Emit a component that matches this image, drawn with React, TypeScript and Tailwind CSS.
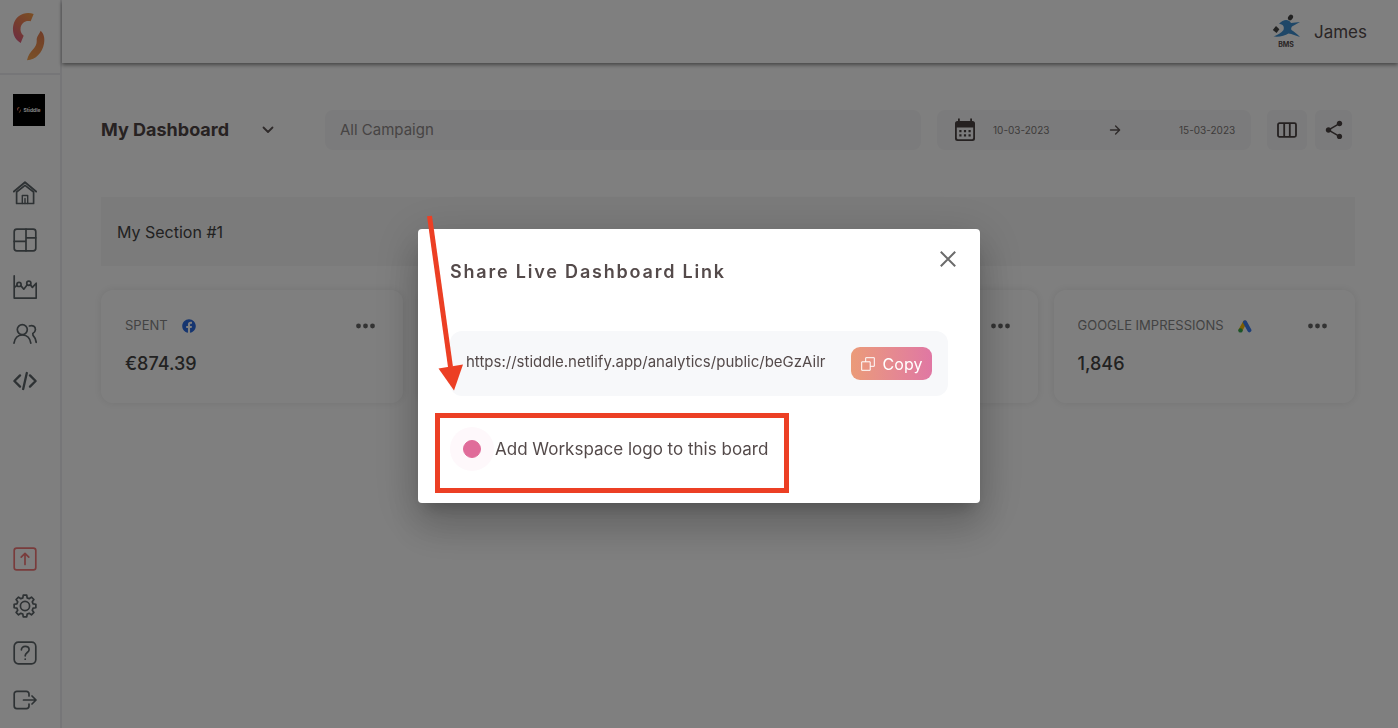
import React, { useState } from "react";
import { FaFacebook } from "react-icons/fa";
import { MdShare } from "react-icons/md";

function BrandMark({ className }: { className: string }) {
  return (
    <svg viewBox="36 36 102 147" className={className} aria-hidden="true">
      <defs>
        <linearGradient id="brandLeft" x1="0.8" y1="0" x2="0.2" y2="1">
          <stop offset="0" stopColor="#f49a4a" />
          <stop offset="0.5" stopColor="#ec7a5c" />
          <stop offset="1" stopColor="#dc5a84" />
        </linearGradient>
        <linearGradient id="brandRight" x1="0.6" y1="0" x2="0.4" y2="1">
          <stop offset="0" stopColor="#e27b50" />
          <stop offset="1" stopColor="#f4a04e" />
        </linearGradient>
      </defs>
      <path fill="url(#brandLeft)" d="M101 42C88 37 70 38 57 48C44 58 38 74 39 91C40 108 48 121 62 129L71 107C63 101 60 92 62 82C65 69 77 60 92 64Z" />
      <path fill="url(#brandRight)" d="M122 92C132 101 135 115 132 131C127 157 108 179 81 181C84 166 91 157 100 147C108 138 111 131 110 117C111 108 118 101 122 92Z" />
    </svg>
  );
}

function Line({ children, width = 1.7 }: { children: React.ReactNode; width?: number }) {
  return (
    <svg
      viewBox="0 0 24 24"
      className="size-6"
      fill="none"
      stroke="currentColor"
      strokeWidth={width}
      strokeLinecap="round"
      strokeLinejoin="round"
      aria-hidden="true"
    >
      {children}
    </svg>
  );
}

const HomeIcon = () => (
  <Line>
    <path d="M.9 10.600 12 1.300l11.100 9.300" strokeWidth="1.900" />
    <path d="M3.600 11v11.500h17V11L12 4.400z" />
    <path d="M9.300 22.500v-8h5.400v8M12 17.500v5" strokeWidth="1.400" />
  </Line>
);
const BoardIcon = () => (
  <Line>
    <rect x="1.200" y="1.200" width="21.600" height="21.600" rx="2.600" />
    <path d="M13 1.200v21.600M1.200 13.400H13M13 9.800h9.800" />
  </Line>
);
const ChartIcon = () => (
  <Line>
    <path d="M1.200.9v22.200h22V8.200l-3.800 4.200-2.200-2.800M1.200 12.600l2.800-2.200M7.800 10.600l3 3.600 3.600-4.600" />
    <circle cx="6" cy="9.400" r="2.100" />
    <circle cx="15.800" cy="8.200" r="2.100" />
  </Line>
);
const UsersIcon = () => (
  <Line>
    <circle cx="9.300" cy="7.600" r="5" />
    <path d="M1 21.200c.6-5 4-8.400 8.400-8.400s7.800 3.400 8.400 8.400M16.400 4c3.600-1.200 6.200.8 6 3.800-.1 1.700-1.200 2.900-2.600 3.600 0 1 .1 2.100.8 2.700 1.500 1.500 2.400 3.600 2.600 6.300" />
  </Line>
);
const CodeIcon = () => (
  <Line width={2.3}>
    <path d="M7 6.400 1.400 12 7 17.600M17 6.400l5.600 5.600-5.600 5.600M13.800 4l-3.600 16" />
  </Line>
);
const UpgradeIcon = () => (
  <Line>
    <rect x="1.200" y="1.200" width="21.600" height="21.600" rx="2.400" />
    <path d="M12 17.500v-11M8.200 10.200 12 6.400l3.800 3.800" />
  </Line>
);

const gearOutline = Array.from({ length: 8 }, (_, tooth) =>
  [
    [-15, 8.4],
    [-9, 11],
    [9, 11],
    [15, 8.4],
  ].map(([offset, radius]) => {
    const angle = ((tooth * 45 + offset) * Math.PI) / 180;
    return `${(12 + radius * Math.sin(angle)).toFixed(2)} ${(12 - radius * Math.cos(angle)).toFixed(2)}`;
  }),
)
  .flat()
  .join("L");

const GearIcon = () => (
  <Line>
    <path d={`M${gearOutline}Z`} />
    <circle cx="12" cy="12" r="4.600" />
  </Line>
);
const HelpIcon = () => (
  <Line>
    <rect x="1.200" y="1.200" width="21.600" height="21.600" rx="4.200" />
    <path d="M8.400 8.800C8.400 6.600 10 5.400 12.200 5.400s3.900 1.300 3.900 3.300c0 2.700-3.900 3-3.900 6.100M12.200 18v.2" />
  </Line>
);
const LogoutIcon = () => (
  <Line>
    <path d="M16 8V6a2.600 2.600 0 0 0-2.600-2.600H3.800A2.600 2.600 0 0 0 1.200 6v12a2.600 2.600 0 0 0 2.600 2.600h9.600A2.600 2.600 0 0 0 16 18v-2M10.500 12h12.300M19 8l4 4-4 4" />
  </Line>
);

const topLinks = [
  { label: "Home", icon: <HomeIcon /> },
  { label: "Dashboards", icon: <BoardIcon /> },
  { label: "Analytics", icon: <ChartIcon /> },
  { label: "Contacts", icon: <UsersIcon /> },
  { label: "Code", icon: <CodeIcon /> },
];
const bottomLinks = [
  { label: "Upgrade", icon: <UpgradeIcon />, tint: "text-[#f27878]" },
  { label: "Settings", icon: <GearIcon />, tint: "text-[#5c6468]" },
  { label: "Help", icon: <HelpIcon />, tint: "text-[#5c6468]" },
  { label: "Log out", icon: <LogoutIcon />, tint: "text-[#5c6468]" },
];

function Sidebar() {
  return (
    <aside className="flex w-[62px] shrink-0 flex-col border-r-2 border-[#ededf0] text-[#5c6468]">
      <a href="#home" aria-label="Stiddle" className="flex h-[75px] items-center border-b-2 border-[#ededf0] pl-3">
        <BrandMark className="h-[49px] w-[34px]" />
      </a>
      <a href="#workspace" aria-label="Workspace" className="mt-[19px] ml-[13px] flex size-8 items-center justify-center gap-0.5 bg-black text-white">
        <BrandMark className="h-1.5 w-1" />
        <span className="text-[5px] leading-none font-bold">Stiddle</span>
      </a>
      <nav aria-label="Main" className="mt-[55px] flex flex-col gap-[23px] pl-[13px]">
        {topLinks.map((l) => (
          <a key={l.label} href="#nav" aria-label={l.label}>{l.icon}</a>
        ))}
      </nav>
      <nav aria-label="Account" className="mt-auto flex flex-col gap-[23px] pb-4 pl-[13px]">
        {bottomLinks.map((l) => (
          <a key={l.label} href="#account" aria-label={l.label} className={l.tint}>{l.icon}</a>
        ))}
      </nav>
    </aside>
  );
}

function Header() {
  return (
    <header className="flex h-[63px] items-center justify-end gap-3 pr-[31px] shadow-[0_2px_4px_rgba(0,0,0,0.45)]">
      <svg viewBox="0 0 30 36" className="h-9 w-[30px]" aria-hidden="true">
        <path fill="#3f8fd0" d="M7 10c4-5 10-5 12-1l9-1-8 4.500c-1 1.500-1 2.500-.5 3.500 3 2 6 4 8.500 7-4-1.500-8-3-11.500-3.500-3.500 2.500-9 3.500-15 3 4-1.500 8-3.500 10-6.500.5-2 .5-4-1-5-1.500-.8-2-1-3.500-1z" />
        <ellipse cx="18.500" cy="3.500" rx="2.300" ry="3" transform="rotate(35 18.500 3.500)" fill="#444" />
        <path fill="#444" d="m4 12 3.400 3.200L4.600 19 .8 16z" />
        <text x="14" y="33" textAnchor="middle" fontSize="7" fontWeight="700" fill="#544c4c">BMS</text>
      </svg>
      <span className="text-[17px] leading-6 text-[#544c4c]">James</span>
    </header>
  );
}

function Toolbar() {
  return (
    <div className="flex h-10 items-center gap-4 pr-[3px]">
      <div className="relative flex w-[208px] shrink-0 items-center">
        <select aria-label="Dashboard" className="w-[174px] appearance-none bg-transparent text-lg leading-6 font-bold text-[#4e4444] outline-none">
          <option>My Dashboard</option>
        </select>
        <svg viewBox="0 0 12 8" className="pointer-events-none absolute left-[161px] h-2 w-3" fill="none" stroke="#5c5454" strokeWidth="1.800" strokeLinecap="round" strokeLinejoin="round" aria-hidden="true">
          <path d="m1.500 1.500 4.500 4.500 4.500-4.500" />
        </svg>
      </div>
      <input
        aria-label="Campaign"
        placeholder="All Campaign"
        className="h-full min-w-0 flex-1 rounded-lg bg-[#f7f7f8] px-[15px] pb-0.5 text-[15px] text-[#8e8888] outline-none placeholder:text-[#8e8888]"
      />
      <div className="flex h-full w-[314px] shrink-0 items-center rounded-lg bg-[#f7f7f8] pr-3.5 pl-4 text-[10px] text-[#7c7676]">
        <svg viewBox="0 0 24 24" className="size-6" fill="#4a4242" aria-hidden="true">
          <path fillRule="evenodd" d="M5 .5h1.800V3h10.400V.5H19V3h.5A2.500 2.500 0 0 1 22 5.500v15a2.500 2.500 0 0 1-2.500 2.500h-15A2.500 2.500 0 0 1 2 20.500v-15A2.500 2.500 0 0 1 4.500 3H5zM3.800 9.500v10.300c0 .9.600 1.500 1.500 1.500h13.400c.9 0 1.500-.6 1.500-1.500V9.500z" />
          <path d="M6.300 12h2.200v2.200H6.300zm4.600 0h2.200v2.200h-2.200zm4.600 0h2.200v2.200h-2.200zM6.300 16.300h2.200v2.200H6.300zm4.600 0h2.200v2.200h-2.200zm4.600 0h2.200v2.200h-2.200z" />
        </svg>
        <input aria-label="Start date" defaultValue="10-03-2023" className="ml-4 w-[58px] bg-transparent outline-none" />
        <svg viewBox="0 0 12 12" className="mx-auto size-3" fill="none" stroke="#5c5454" strokeWidth="1.400" strokeLinecap="round" strokeLinejoin="round" aria-hidden="true">
          <path d="M1.500 6h9M6.600 2l4 4-4 4" />
        </svg>
        <input aria-label="End date" defaultValue="15-03-2023" className="w-[58px] bg-transparent outline-none" />
      </div>
      <div className="flex h-full shrink-0 gap-2">
        <button aria-label="Columns" className="flex w-10 items-center justify-center rounded-md bg-[#f7f7f8]">
          <svg viewBox="0 0 20 16" className="h-4 w-5" fill="none" stroke="#4a4242" strokeWidth="1.800" aria-hidden="true">
            <rect x="1" y="1.200" width="18" height="13.600" rx="1.500" />
            <path d="M7.200 1v14M12.800 1v14" />
          </svg>
        </button>
        <button aria-label="Share" className="flex w-[37px] items-center justify-center rounded-md bg-[#f7f7f8] text-[#4a4242]">
          <MdShare className="size-[22px]" />
        </button>
      </div>
    </div>
  );
}

const AdsIcon = () => (
  <svg viewBox="0 0 14 13" className="h-[13px] w-3.5" strokeLinecap="round" aria-hidden="true">
    <path d="M6.600 2.600 2.600 10" stroke="#fbbc04" strokeWidth="4" />
    <path d="m7 2.300 4.400 8" stroke="#3c7cf0" strokeWidth="4" />
    <circle cx="2.500" cy="10.400" r="2.200" fill="#34a853" />
  </svg>
);

function Metric({ label, value, icon }: { label?: string; value?: string; icon?: React.ReactNode }) {
  return (
    <article className="flex h-[113px] min-w-0 flex-col gap-3 rounded-xl bg-white px-6 pt-6 shadow-[0_0_10px_rgba(0,0,0,0.09)]">
      <div className="flex h-6 items-center">
        {label && <h3 className="mr-3.5 truncate text-[13px] text-[#868686]">{label}</h3>}
        {icon}
        <button aria-label="More options" className="ml-auto pr-1">
          <svg viewBox="0 0 19 6" className="h-1.5 w-[19px]" fill="#666" aria-hidden="true">
            <circle cx="2.500" cy="3" r="2.400" />
            <circle cx="9.500" cy="3" r="2.400" />
            <circle cx="16.500" cy="3" r="2.400" />
          </svg>
        </button>
      </div>
      {value && <p className="text-lg leading-7 font-medium text-[#444]">{value}</p>}
    </article>
  );
}

function ShareDialog() {
  const [logo, setLogo] = useState(true);
  return (
    <div className="fixed inset-0 flex items-center justify-center bg-black/50 pt-1">
      <section
        role="dialog"
        aria-modal="true"
        aria-labelledby="share-title"
        className="relative w-[562px] rounded bg-white px-8 pb-8 text-[#544a4a] shadow-[0_11px_15px_-7px_rgba(0,0,0,0.2),0_24px_38px_3px_rgba(0,0,0,0.14),0_9px_46px_8px_rgba(0,0,0,0.12)]"
      >
        <div className="flex h-[102px] justify-between">
          <h2 id="share-title" className="mt-[31px] text-lg leading-6 font-semibold tracking-widest">Share Live Dashboard Link</h2>
          <button aria-label="Close" className="mt-[18px] -mr-3 flex size-6 items-center justify-center">
            <svg viewBox="0 0 16 16" className="size-4" fill="none" stroke="#6b6b6b" strokeWidth="2" aria-hidden="true">
              <path d="m.8.8 14.400 14.400M15.200.8.8 15.200" />
            </svg>
          </button>
        </div>
        <div className="flex h-[65px] items-center gap-4 rounded-xl bg-[#f7f8fa] px-4">
          <input aria-label="Live dashboard link" readOnly value="https://stiddle.netlify.app/analytics/public/beGzAilr" className="min-w-0 flex-1 bg-transparent pb-0.5 text-[15px] outline-none" />
          <button className="flex h-[33px] w-[81px] items-center justify-center gap-2 rounded-[9px] bg-linear-to-r from-[#eb9b78] to-[#e077a3] text-base text-white">
            <svg viewBox="0 0 14 14" className="size-3.5" fill="none" stroke="currentColor" strokeWidth="1" aria-hidden="true">
              <path d="M.7 4.800h8.500v8.500H.7zM4.700 4.800V.7h8.600v8.600H9.200" />
            </svg>
            Copy
          </button>
        </div>
        <div className="mt-[31px] flex h-11 items-center">
          <span className="mr-px flex size-11 items-center justify-center rounded-full bg-[#fef8fb]">
            <input
              id="workspace-logo"
              type="checkbox"
              checked={logo}
              onChange={(e) => setLogo(e.target.checked)}
              className="size-[18px] appearance-none rounded-full border border-[#e06c9a] checked:bg-[#e06c9a]"
            />
          </span>
          <label htmlFor="workspace-logo" className="text-[17px] leading-6">Add Workspace logo to this board</label>
        </div>
        <div className="pointer-events-none absolute top-[184px] left-[17px] h-20 w-[354px] border-5 border-[#ec3f24]" />
        <svg viewBox="0 0 50 180" className="pointer-events-none absolute -top-4 left-0 h-[180px] w-[50px]" aria-hidden="true">
          <path d="m11.500 3 21 151" stroke="#ec3f24" strokeWidth="5" />
          <path d="m20.500 155.500 24.500-4-9 26z" fill="#ec3f24" />
        </svg>
      </section>
    </div>
  );
}

export default function App() {
  return (
    <div className="flex min-h-screen bg-white [font-family:Inter,sans-serif]">
      <Sidebar />
      <div className="min-w-0 flex-1">
        <Header />
        <main className="pt-[47px] pr-[43px] pl-[39px]">
          <Toolbar />
          <section className="mt-[47px]">
            <h2 className="flex h-[69px] items-center bg-[#f6f6f6] px-4 text-base text-[#444]">My Section #1</h2>
            <div className="mt-6 grid grid-cols-4 gap-4">
              <Metric label="SPENT" value="€874.39" icon={<FaFacebook className="size-3.5 text-[#2a6ae0]" />} />
              <Metric />
              <Metric />
              <Metric label="GOOGLE IMPRESSIONS" value="1,846" icon={<AdsIcon />} />
            </div>
          </section>
        </main>
      </div>
      <ShareDialog />
    </div>
  );
}
